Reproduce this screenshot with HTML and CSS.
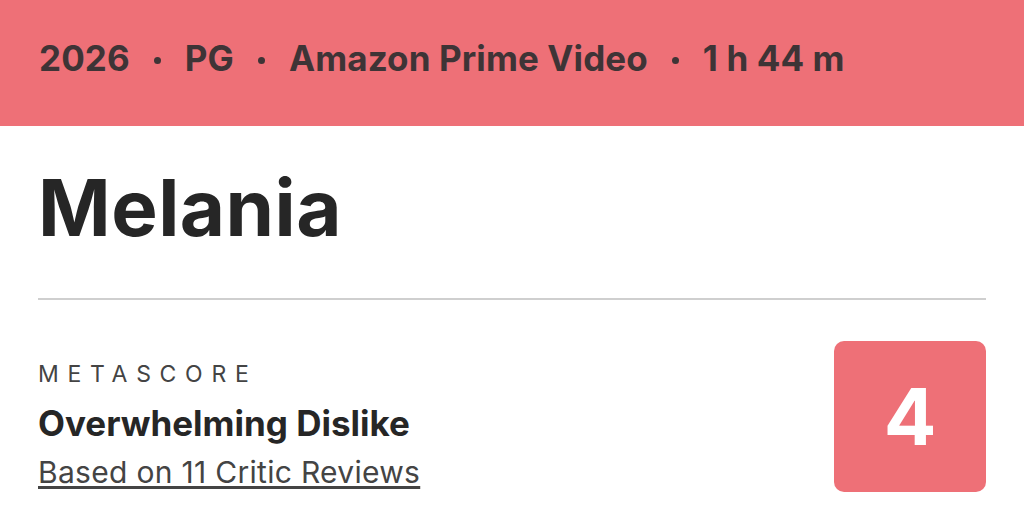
FILE: index.html
```html
<!DOCTYPE html>
<html>
<head>
<meta charset="utf-8">
<link rel="stylesheet" href="styles.css">
</head>
<body>
<header class="meta-bar">
  <span>2026</span><span class="dot"></span><span>PG</span><span class="dot"></span><span>Amazon Prime Video</span><span class="dot"></span><span>1 h 44 m</span>
</header>
<main class="content">
  <h1 class="title">Melania</h1>
  <hr class="divider">
  <section class="score-row">
    <div class="score-text">
      <div class="label">METASCORE</div>
      <div class="verdict">Overwhelming Dislike</div>
      <a class="reviews" href="#">Based on 11 Critic Reviews</a>
    </div>
    <div class="score-box">4</div>
  </section>
</main>
</body>
</html>
```
FILE: styles.css
```css
html, body {
  margin: 0;
  padding: 0;
  background: #ffffff;
  font-family: "Inter", "Liberation Sans", sans-serif;
  color: #262626;
}
.meta-bar {
  height: 126px;
  background: #ee7077;
  display: flex;
  align-items: center;
  padding: 0 0 10px 39px;
  box-sizing: border-box;
  font-size: 35px;
  font-weight: 700;
  color: #3e3436;
  letter-spacing: 0.1px;
}
.meta-bar .dot {
  width: 7px;
  height: 7px;
  border-radius: 50%;
  background: #3e3436;
  margin: 4px 24px 0;
}
.content {
  padding: 0 38px;
}
.title {
  margin: 0;
  padding-top: 34px;
  font-size: 78px;
  font-weight: 700;
  line-height: 96px;
  letter-spacing: 0.5px;
}
.divider {
  border: 0;
  height: 2px;
  background: #cfcfcf;
  margin: 42px 0 0;
}
.score-row {
  display: flex;
  justify-content: space-between;
  align-items: flex-start;
  margin-top: 41px;
}
.label {
  font-size: 23px;
  letter-spacing: 8.7px;
  color: #444;
  margin-top: 19px;
  line-height: 28px;
}
.verdict {
  font-size: 35px;
  font-weight: 700;
  line-height: 40px;
  margin-top: 15px;
}
.reviews {
  display: inline-block;
  font-size: 30px;
  color: #444;
  text-decoration: underline;
  text-underline-offset: 3px;
  line-height: 36px;
  margin-top: 11px;
  letter-spacing: 0.3px;
}
.score-box {
  width: 152px;
  height: 151px;
  border-radius: 10px;
  background: #ee7077;
  color: #fff;
  font-size: 78px;
  font-weight: 700;
  display: flex;
  align-items: center;
  justify-content: center;
}
```
